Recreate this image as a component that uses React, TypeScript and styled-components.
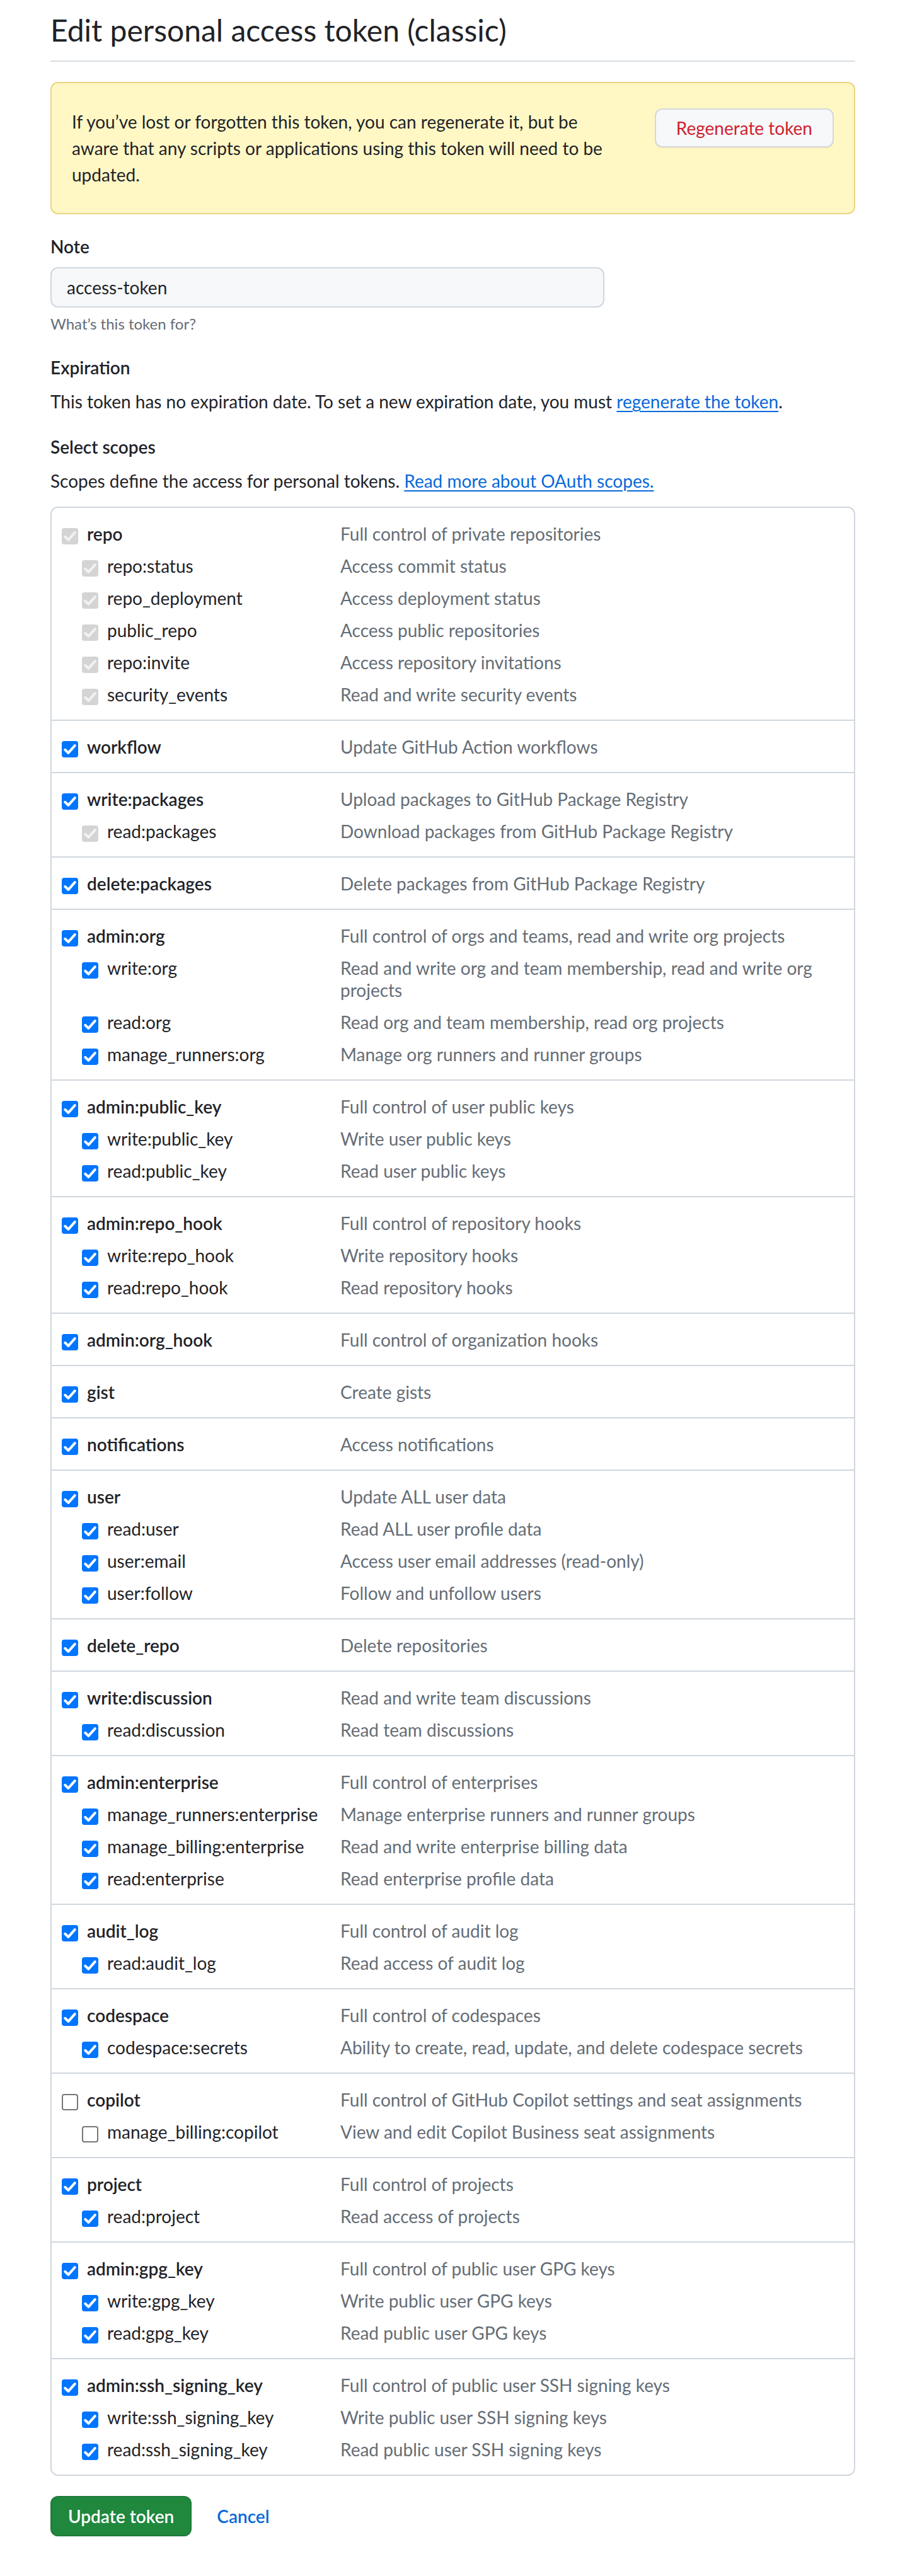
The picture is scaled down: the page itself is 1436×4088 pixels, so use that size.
import React from 'react';
import styled, { createGlobalStyle } from 'styled-components';

type CheckState = 'on' | 'off' | 'disabled';

interface Scope {
  name: string;
  desc: string;
  state: CheckState;
}

interface ScopeGroupData {
  parent: Scope;
  children: Scope[];
}

const on = (name: string, desc: string): Scope => ({ name, desc, state: 'on' });
const dis = (name: string, desc: string): Scope => ({ name, desc, state: 'disabled' });
const off = (name: string, desc: string): Scope => ({ name, desc, state: 'off' });

const GROUPS: ScopeGroupData[] = [
  {
    parent: dis('repo', 'Full control of private repositories'),
    children: [
      dis('repo:status', 'Access commit status'),
      dis('repo_deployment', 'Access deployment status'),
      dis('public_repo', 'Access public repositories'),
      dis('repo:invite', 'Access repository invitations'),
      dis('security_events', 'Read and write security events'),
    ],
  },
  { parent: on('workflow', 'Update GitHub Action workflows'), children: [] },
  {
    parent: on('write:packages', 'Upload packages to GitHub Package Registry'),
    children: [dis('read:packages', 'Download packages from GitHub Package Registry')],
  },
  { parent: on('delete:packages', 'Delete packages from GitHub Package Registry'), children: [] },
  {
    parent: on('admin:org', 'Full control of orgs and teams, read and write org projects'),
    children: [
      on('write:org', 'Read and write org and team membership, read and write org projects'),
      on('read:org', 'Read org and team membership, read org projects'),
      on('manage_runners:org', 'Manage org runners and runner groups'),
    ],
  },
  {
    parent: on('admin:public_key', 'Full control of user public keys'),
    children: [on('write:public_key', 'Write user public keys'), on('read:public_key', 'Read user public keys')],
  },
  {
    parent: on('admin:repo_hook', 'Full control of repository hooks'),
    children: [on('write:repo_hook', 'Write repository hooks'), on('read:repo_hook', 'Read repository hooks')],
  },
  { parent: on('admin:org_hook', 'Full control of organization hooks'), children: [] },
  { parent: on('gist', 'Create gists'), children: [] },
  { parent: on('notifications', 'Access notifications'), children: [] },
  {
    parent: on('user', 'Update ALL user data'),
    children: [
      on('read:user', 'Read ALL user profile data'),
      on('user:email', 'Access user email addresses (read-only)'),
      on('user:follow', 'Follow and unfollow users'),
    ],
  },
  { parent: on('delete_repo', 'Delete repositories'), children: [] },
  {
    parent: on('write:discussion', 'Read and write team discussions'),
    children: [on('read:discussion', 'Read team discussions')],
  },
  {
    parent: on('admin:enterprise', 'Full control of enterprises'),
    children: [
      on('manage_runners:enterprise', 'Manage enterprise runners and runner groups'),
      on('manage_billing:enterprise', 'Read and write enterprise billing data'),
      on('read:enterprise', 'Read enterprise profile data'),
    ],
  },
  {
    parent: on('audit_log', 'Full control of audit log'),
    children: [on('read:audit_log', 'Read access of audit log')],
  },
  {
    parent: on('codespace', 'Full control of codespaces'),
    children: [on('codespace:secrets', 'Ability to create, read, update, and delete codespace secrets')],
  },
  {
    parent: off('copilot', 'Full control of GitHub Copilot settings and seat assignments'),
    children: [off('manage_billing:copilot', 'View and edit Copilot Business seat assignments')],
  },
  {
    parent: on('project', 'Full control of projects'),
    children: [on('read:project', 'Read access of projects')],
  },
  {
    parent: on('admin:gpg_key', 'Full control of public user GPG keys'),
    children: [on('write:gpg_key', 'Write public user GPG keys'), on('read:gpg_key', 'Read public user GPG keys')],
  },
  {
    parent: on('admin:ssh_signing_key', 'Full control of public user SSH signing keys'),
    children: [
      on('write:ssh_signing_key', 'Write public user SSH signing keys'),
      on('read:ssh_signing_key', 'Read public user SSH signing keys'),
    ],
  },
];

const GlobalStyle = createGlobalStyle`
  html, body {
    margin: 0;
    padding: 0;
    background: #ffffff;
  }
  body {
    font-family: Lato, "Noto Sans", "Liberation Sans", sans-serif;
    color: #1f2328;
  }
  *, *::before, *::after {
    box-sizing: border-box;
  }
`;

const Page = styled.main`
  width: 1277px;
  margin-left: 80px;
  padding: 18px 0 64px;
`;

const Subhead = styled.div`
  padding-bottom: 18px;
  border-bottom: 2px solid #d8dee4;
  margin-bottom: 32px;
`;

const Heading = styled.h1`
  margin: 0;
  font-size: 48px;
  font-weight: 400;
  line-height: 60px;
`;

const Flash = styled.div`
  display: flex;
  align-items: flex-start;
  justify-content: space-between;
  padding: 40px 32px;
  background: #fff8c5;
  border: 2px solid rgba(212, 167, 44, 0.45);
  border-radius: 12px;
`;

const FlashText = styled.p`
  flex: 0 1 auto;
  width: 845px;
  margin: 0;
  font-size: 28px;
  line-height: 42px;
`;

const Button = styled.button<{ $variant: 'danger' | 'primary' }>`
  flex: none;
  height: ${(p) => (p.$variant === 'primary' ? '64px' : '62px')};
  padding: 0 ${(p) => (p.$variant === 'primary' ? '26px' : '32px')};
  font-family: inherit;
  font-size: 28px;
  font-weight: ${(p) => (p.$variant === 'primary' ? 600 : 400)};
  border-radius: 12px;
  border: 2px solid rgba(31, 35, 40, 0.15);
  box-shadow: 0 2px 0 rgba(31, 35, 40, 0.04);
  background: ${(p) => (p.$variant === 'primary' ? '#1f883d' : '#f6f8fa')};
  color: ${(p) => (p.$variant === 'primary' ? '#ffffff' : '#cf222e')};
  cursor: pointer;
`;

const FieldGroup = styled.section`
  margin-top: 30px;
`;

const FieldLabel = styled.h3`
  margin: 0 0 12px;
  font-size: 28px;
  font-weight: 600;
  line-height: 42px;
`;

const TextInput = styled.input`
  display: block;
  width: 879px;
  height: 64px;
  padding: 0 24px;
  font-family: inherit;
  font-size: 28px;
  color: #1f2328;
  background: #f6f8fa;
  border: 2px solid #d0d7de;
  border-radius: 12px;
  outline: none;
`;

const Hint = styled.p`
  margin: 8px 0 0;
  font-size: 24px;
  line-height: 36px;
  color: #656d76;
`;

const BodyText = styled.p`
  margin: 0;
  font-size: 28px;
  line-height: 42px;
`;

const Link = styled.a`
  color: #0969da;
  text-decoration: underline;
  text-decoration-thickness: 2px;
  text-underline-offset: 4px;
`;

const ScopeList = styled.div`
  margin-top: 20px;
  border: 2px solid #d0d7de;
  border-radius: 12px;
`;

const ScopeGroup = styled.ul`
  list-style: none;
  margin: 0;
  padding: 16px 16px 14px;

  & + & {
    border-top: 2px solid #d0d7de;
  }
`;

const ScopeRow = styled.li`
  display: flex;
  align-items: flex-start;
  padding: 8px 0;
  font-size: 28px;
  line-height: 35px;
`;

const ScopeLabel = styled.label<{ $nested: boolean }>`
  flex: none;
  display: flex;
  align-items: flex-start;
  gap: 14px;
  width: 442px;
  padding-left: ${(p) => (p.$nested ? '32px' : '0')};
  font-weight: ${(p) => (p.$nested ? 400 : 600)};
  color: #1f2328;
`;

const Box = styled.span<{ $state: CheckState }>`
  flex: none;
  display: flex;
  align-items: center;
  justify-content: center;
  width: 26px;
  height: 26px;
  margin-top: 8px;
  border-radius: 4px;
  background: ${(p) => (p.$state === 'on' ? '#0075ff' : p.$state === 'disabled' ? '#d4d4d4' : '#ffffff')};
  border: ${(p) => (p.$state === 'off' ? '2px solid #767676' : 'none')};
`;

const ScopeDesc = styled.span`
  flex: 1;
  padding-right: 16px;
  color: #656d76;
`;

const Actions = styled.div`
  display: flex;
  align-items: center;
  margin-top: 32px;
`;

const CancelLink = styled.a`
  margin-left: 8px;
  padding: 0 32px;
  font-size: 28px;
  font-weight: 600;
  line-height: 64px;
  color: #0969da;
  text-decoration: none;
`;

function Checkbox({ state }: { state: CheckState }) {
  return (
    <Box $state={state} role="checkbox" aria-checked={state !== 'off'} aria-disabled={state === 'disabled'}>
      {state !== 'off' && (
        <svg width="26" height="26" viewBox="0 0 13 13" aria-hidden="true">
          <path
            d="M2.6 6.9 L5.2 9.4 L10.4 3.6"
            fill="none"
            stroke={state === 'disabled' ? '#f2f2f2' : '#ffffff'}
            strokeWidth="2"
            strokeLinecap="round"
            strokeLinejoin="round"
          />
        </svg>
      )}
    </Box>
  );
}

function ScopeItem({ scope, nested }: { scope: Scope; nested: boolean }) {
  return (
    <ScopeRow>
      <ScopeLabel $nested={nested}>
        <Checkbox state={scope.state} />
        <span>{scope.name}</span>
      </ScopeLabel>
      <ScopeDesc>{scope.desc}</ScopeDesc>
    </ScopeRow>
  );
}

export default function App() {
  return (
    <>
      <GlobalStyle />
      <Page>
        <Subhead>
          <Heading>Edit personal access token (classic)</Heading>
        </Subhead>

        <Flash>
          <FlashText>
            If you’ve lost or forgotten this token, you can regenerate it, but be aware that any scripts or
            applications using this token will need to be updated.
          </FlashText>
          <Button $variant="danger" type="button">
            Regenerate token
          </Button>
        </Flash>

        <FieldGroup>
          <FieldLabel>Note</FieldLabel>
          <TextInput type="text" defaultValue="access-token" aria-label="Note" />
          <Hint>What’s this token for?</Hint>
        </FieldGroup>

        <FieldGroup>
          <FieldLabel>Expiration</FieldLabel>
          <BodyText>
            This token has no expiration date. To set a new expiration date, you must{' '}
            <Link href="#">regenerate the token</Link>.
          </BodyText>
        </FieldGroup>

        <FieldGroup>
          <FieldLabel>Select scopes</FieldLabel>
          <BodyText>
            Scopes define the access for personal tokens. <Link href="#">Read more about OAuth scopes.</Link>
          </BodyText>
          <ScopeList>
            {GROUPS.map((g) => (
              <ScopeGroup key={g.parent.name}>
                <ScopeItem scope={g.parent} nested={false} />
                {g.children.map((c) => (
                  <ScopeItem key={c.name} scope={c} nested />
                ))}
              </ScopeGroup>
            ))}
          </ScopeList>
        </FieldGroup>

        <Actions>
          <Button $variant="primary" type="submit">
            Update token
          </Button>
          <CancelLink href="#">Cancel</CancelLink>
        </Actions>
      </Page>
    </>
  );
}
